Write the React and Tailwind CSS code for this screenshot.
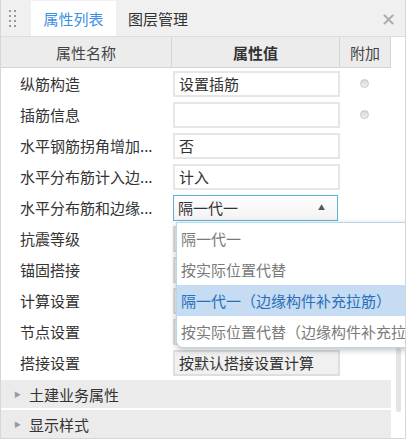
import React from 'react';

const rows = [
  { name: '纵筋构造', value: '设置插筋', radio: true },
  { name: '插筋信息', value: '', radio: true },
  { name: '水平钢筋拐角增加...', value: '否' },
  { name: '水平分布筋计入边...', value: '计入' },
  { name: '水平分布筋和边缘...', value: '隔一代一', select: true },
  { name: '抗震等级', value: '', gray: true },
  { name: '锚固搭接', value: '', gray: true },
  { name: '计算设置', value: '', gray: true },
  { name: '节点设置', value: '', gray: true },
  { name: '搭接设置', value: '按默认搭接设置计算', gray: true },
];

const options = [
  { label: '隔一代一' },
  { label: '按实际位置代替' },
  { label: '隔一代一（边缘构件补充拉筋）', active: true },
  { label: '按实际位置代替（边缘构件补充拉筋）' },
];

function Grip() {
  return (
    <div className="grid grid-cols-2 gap-x-[3px] gap-y-[3px] w-[7px] ml-[8px]">
      {Array.from({ length: 8 }).map((_, i) => (
        <span key={i} className="block w-[2px] h-[2px] bg-[#9a9a9a]" />
      ))}
    </div>
  );
}

function Dropdown() {
  return (
    <div className="absolute left-[3px] top-[27px] w-[240px] z-10 bg-white border border-[#b9d7ea] rounded-bl-[7px] shadow-[0_2px_6px_rgba(0,0,0,0.25)] overflow-hidden">
      {options.map((o) => (
        <div
          key={o.label}
          className={
            'h-[31px] flex items-center pl-[4px] whitespace-nowrap ' +
            (o.active ? 'bg-[#c5dcf2] text-[#2a6fb8]' : 'text-[#7a7a7a]')
          }
        >
          {o.label}
        </div>
      ))}
    </div>
  );
}

function ValueCell({ row }) {
  if (row.select) {
    return (
      <div className="relative">
        <div className="h-[26px] w-[165px] border border-[#5ab4dc] bg-gradient-to-b from-white to-[#f3f3f3] flex items-center justify-between pl-[4px] pr-[12px] text-[#333]">
          <span>{row.value}</span>
          <span className="text-[7px] text-[#555]">▲</span>
        </div>
        <Dropdown />
      </div>
    );
  }
  return (
    <div
      className={
        'h-[26px] w-[167px] border-2 flex items-center pl-[4px] text-[#333] ' +
        (row.gray ? 'bg-[#f0f0f0] border-[#dedede]' : 'bg-white border-[#e6e6e6]')
      }
    >
      {row.value}
    </div>
  );
}

export default function App() {
  return (
    <div
      className="w-[406px] h-[439px] bg-white border-l border-r border-b border-[#d6d6d6] text-[15px] leading-none overflow-hidden flex flex-col"
      style={{ fontFamily: '"Noto Sans CJK SC", "Noto Sans", sans-serif' }}
    >
      {/* tabs */}
      <div className="h-[37px] bg-[#f0f0f0] border-b border-[#dcdcdc] flex items-stretch">
        <div className="w-[30px] flex items-center">
          <Grip />
        </div>
        <div className="mt-[1px] w-[85px] bg-white flex items-center justify-center text-[#3d8ee6]">
          属性列表
        </div>
        <div className="w-[84px] flex items-center justify-center text-[#333]">图层管理</div>
        <div className="flex-1" />
        <div className="w-[34px] flex items-center justify-center text-[#aaa] text-[18px] font-light">✕</div>
      </div>

      {/* header */}
      <div className="h-[31px] flex">
        <div className="w-[171px] bg-[#ececec] border-r border-b border-[#d4d4d4] flex items-center justify-center text-[#444]">
          属性名称
        </div>
        <div className="w-[168px] bg-[#ececec] border-r border-b border-[#d4d4d4] flex items-center justify-center text-[#333] font-bold">
          属性值
        </div>
        <div className="w-[51px] bg-[#ececec] border-r border-b border-[#d4d4d4] flex items-center justify-center text-[#444]">
          附加
        </div>
        <div className="flex-1" />
      </div>

      {/* rows */}
      <div className="flex">
        <div className="w-[390px]">
          {rows.map((row) => (
            <div key={row.name} className="h-[31px] flex items-center">
              <div className="w-[172px] pl-[19px] text-[#333] whitespace-nowrap">{row.name}</div>
              <ValueCell row={row} />
              <div className="flex-1 flex items-center justify-center">
                {row.radio && (
                  <span className="block w-[9px] h-[9px] rounded-full border border-[#c8c8c8] bg-gradient-to-b from-[#d8d8d8] to-[#f0f0f0] translate-x-[-1px]" />
                )}
              </div>
            </div>
          ))}
          <div className="h-[2px]" />
          <div className="h-[30px] bg-[#ebebeb] flex items-center border-b-2 border-white">
            <span className="ml-[13px] text-[7px] text-[#999]">▶</span>
            <span className="ml-[8px] text-[#333]">土建业务属性</span>
          </div>
          <div className="h-[28px] bg-[#ebebeb] flex items-center">
            <span className="ml-[13px] text-[7px] text-[#999]">▶</span>
            <span className="ml-[8px] text-[#333]">显示样式</span>
          </div>
        </div>
        <div className="flex-1 flex flex-col justify-end pb-[26px]">
          <div className="ml-[5px] w-[5px] h-[64px] bg-[#e4e4e4] rounded-[2px]" />
        </div>
      </div>
    </div>
  );
}
